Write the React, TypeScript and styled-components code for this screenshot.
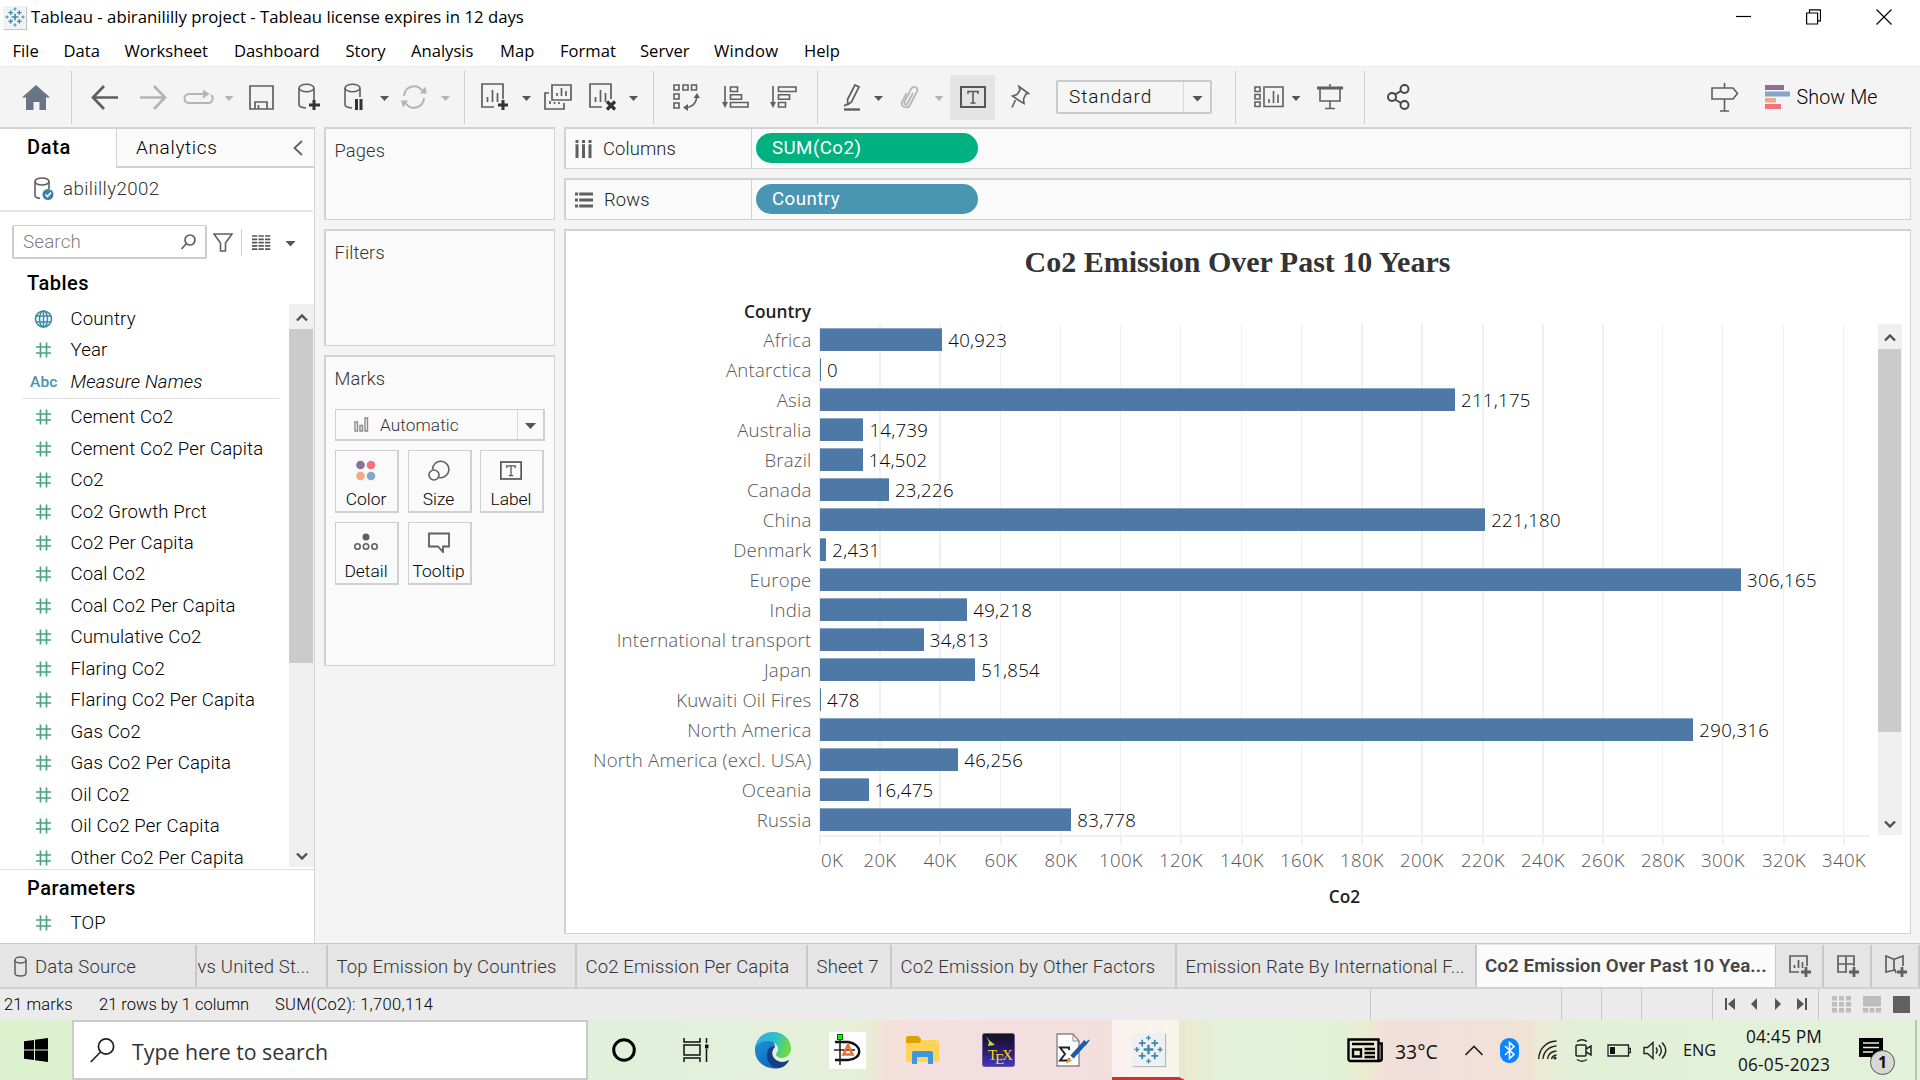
import React from "react";
import styled, { createGlobalStyle, css } from "styled-components";

const ui = `Roboto, "Liberation Sans", sans-serif`;
const segoe = `"Open Sans", "Noto Sans", sans-serif`;
const line = "#d2d2d2";
const ink = "#5f5f5f";
const faint = "#b4b4b4";

const GlobalStyle = createGlobalStyle`
  * { box-sizing: border-box; }
  body { margin: 0; background: #f4f4f4; overflow: hidden; }
  svg { display: block; flex: none; }
`;

const Window = styled.div`
  width: 1920px; height: 1080px; display: flex; flex-direction: column;
  background: #f4f4f4; font-family: ${ui}; font-weight: 300; color: #000; overflow: hidden; white-space: nowrap;
`;

/* ---------- title and menu ---------- */
const TitleBar = styled.header`
  height: 34px; flex: none; background: #fff; display: flex; align-items: center; padding: 0 28px 0 3px;
  font: 16.76px/34px ${segoe};
`;
const AppBadge = styled.div`
  width: 23px; height: 23px; margin-right: 5px; background: #f1f2f4; box-shadow: 1px 1px 1px #c4c6c8;
  display: flex; align-items: center; justify-content: center;
`;
const TitleText = styled.span`padding-top: 0;`;
const WindowButtons = styled.div`margin-left: auto; display: flex; gap: 55px; align-items: center;`;
const MenuBar = styled.nav`
  height: 32px; flex: none; background: #fff; display: flex; padding-left: 12.5px; font: 16.6px/33px ${segoe};
`;
const MenuItem = styled.span<{ $w: number; $ls?: number }>`
  width: ${p => p.$w}px; letter-spacing: ${p => p.$ls ?? 0}px;
`;

/* ---------- toolbar ---------- */
const Toolbar = styled.div`
  height: 61px; flex: none; display: flex; align-items: center; background: #f4f4f4; border-top: 1px solid #ececec;
`;
const Tool = styled.div<{ $gap: number; $w: number; $on?: boolean }>`
  margin-left: ${p => p.$gap}px; width: ${p => p.$w}px; height: 45px; flex: none;
  display: flex; align-items: center; justify-content: center;
  background: ${p => (p.$on ? "#e4e4e4" : "transparent")};
`;
const Rule = styled.i<{ $gap: number }>`
  margin-left: ${p => p.$gap}px; width: 1px; height: 53px; flex: none; background: #cfcfcf;
`;
const Caret = styled.i<{ $gap?: number; $c?: string; $w?: number }>`
  margin-left: ${p => p.$gap ?? 0}px; margin-top: 3px; width: ${p => p.$w ?? 9}px; height: ${p => (p.$w ? 6 : 5)}px; flex: none;
  background: ${p => p.$c ?? "#555"}; clip-path: polygon(0 0, 100% 0, 50% 100%);
`;
const FitSelect = styled.div`
  margin-left: 26px; width: 156px; height: 34px; border: 2px solid #cbcbcb; border-radius: 2px; background: #f5f5f5;
  display: flex; align-items: center; font-size: 19px; letter-spacing: 0.95px; color: #111;
  span { width: 126px; padding-left: 11px; line-height: 30px; border-right: 1px solid #d8d8d8; }
`;
const ShowMe = styled.span`margin-left: 7px; font-size: 19.7px; letter-spacing: 0.1px; color: #000;`;

/* ---------- body ---------- */
const Body = styled.main`height: 816px; flex: none; display: flex;`;

const DataPane = styled.aside`
  width: 315px; background: #fff; border-top: 2px solid ${line}; border-right: 1px solid ${line};
  display: flex; flex-direction: column;
`;
const PaneTabs = styled.div`height: 39px; flex: none; display: flex;`;
const PaneTabOn = styled.div`width: 116px; padding-left: 27px; font: 500 20px/37px ${ui}; letter-spacing: 0.65px;`;
const PaneTab = styled.div`
  flex: 1; display: flex; justify-content: space-between; align-items: center; padding: 0 11px 0 19px;
  background: #fafafa; border-left: 1px solid ${line}; border-bottom: 2px solid ${line};
  font-size: 19px; letter-spacing: 0.65px; color: #000;
`;
const Source = styled.div`
  height: 44px; flex: none; display: flex; align-items: center; gap: 9px; padding-left: 34px; margin-right: 1px;
  border-bottom: 2px solid #e4e4e4; font-size: 18.7px; letter-spacing: 0.4px; color: #333;
`;
const SearchRow = styled.div`height: 62px; flex: none; display: flex; align-items: center; padding: 0 0 2px 12px;`;
const SearchBox = styled.div`
  width: 195px; height: 34px; border: 2px solid #cdcdcd; border-width: 1px 2px 2px; border-radius: 2px; display: flex; align-items: center;
  justify-content: space-between; padding: 0 9px; font-size: 18.8px; letter-spacing: 0.15px; color: #808080;
`;
const SearchRule = styled.i`width: 1px; height: 27px; background: #ccc; margin: 0 10px 0 8px;`;
const Heading = styled.h3<{ $h: number; $lh: number }>`
  margin: 0; height: ${p => p.$h}px; flex: none; padding-left: 27px; font: 500 20px/${p => p.$lh}px ${ui}; letter-spacing: 0.5px;
`;
const FieldArea = styled.div`height: 566px; flex: none; display: flex; border-bottom: 1px solid #dedede;`;
const Fields = styled.ul`flex: 1; margin: -1px 0 0; padding: 0; list-style: none;`;
const Field = styled.li<{ $i?: boolean }>`
  height: 31.47px; display: flex; align-items: center; font-size: 18.6px; letter-spacing: 0.13px; color: #000;
  font-style: ${p => (p.$i ? "italic" : "normal")};
  svg, b { margin-left: 30px; margin-right: 13.5px; width: 27px; flex: none; }
  b { font: 500 15.5px ${ui}; color: #4a90b0; text-align: center; }
`;
const FieldRule = styled.li`height: 1px; margin: 1px 10px 2px 23px; background: #dcdcdc;`;

const ScrollBar = styled.div<{ $w: number; $ml?: number }>`
  width: ${p => p.$w}px; margin-left: ${p => p.$ml ?? 0}px; flex: none; background: #f0f0f0; display: flex; flex-direction: column;
  justify-content: space-between; align-items: center; margin-bottom: 2px;
`;
const ScrollEnd = styled.div`height: 25px; padding-top: 3px; display: flex; align-items: center; justify-content: center;`;
const Thumb = styled.div<{ $h: number }>`
  height: ${p => p.$h}px; width: calc(100% - 1px); align-self: flex-start; background: #cbcbcb; margin-bottom: auto;
`;

const card = css`border: solid ${line}; border-width: 2px 1px 1px 2px; background: #fafafa;`;
const Cards = styled.section`width: 231px; margin-left: 9px; display: flex; flex-direction: column; gap: 9px;`;
const Card = styled.div<{ $h: number }>`
  ${card} height: ${p => p.$h}px; padding: 10px 9px 0; font-size: 18.3px; letter-spacing: 0.15px; color: #333;
`;
const CardName = styled.div`line-height: 24px; height: 24px; margin-left: -0.5px;`;
const MarkType = styled.div`
  margin-top: 18px; width: 210px; height: 32px; border: 2px solid #cfcfcf; border-width: 1px 2px 2px 1px; display: flex; align-items: center;
  font-size: 17.2px; letter-spacing: 0.1px; color: #333;
  div { display: flex; align-items: center; gap: 11px; width: 182px; height: 100%; padding-left: 18px; border-right: 1px solid #dadada; }
`;
const MarkGrid = styled.div`margin-top: 9px; display: grid; grid-template-columns: repeat(3, 64px); gap: 9px 8.500px;`;
const MarkButton = styled.div`
  height: 63px; border: 2px solid #d0d0d0; border-width: 1px 2px 2px 1px; display: flex; flex-direction: column; align-items: center;
  justify-content: space-between; padding: 8px 1px 1px 0; font-size: 17.4px; line-height: 22px; color: #000; letter-spacing: 0;
`;

const Sheet = styled.section`width: 1347px; margin-left: 9px; display: flex; flex-direction: column; gap: 9px;`;
const Shelf = styled.div`${card} height: 42px; flex: none; display: flex; align-items: center;`;
const ShelfName = styled.div`
  width: 186px; height: 100%; border-right: 1px solid ${line}; display: flex; align-items: center; gap: 11px; padding-left: 9px;
  font-size: 18.4px; letter-spacing: 0.1px; color: #222;
`;
const Pill = styled.div<{ $c: string }>`
  margin: -2px 0 0 4px; width: 222px; height: 30px; border-radius: 15px; background: ${p => p.$c};
  color: #fff; font: 18.7px/30px ${ui}; letter-spacing: 0.45px; padding-left: 16px;
`;
const View = styled.div`${card} background: #fff; height: 705px; display: flex; flex-direction: column;`;
const ChartTitle = styled.h1`
  margin: 14px 0 0; padding-right: 1px; height: 35px; text-align: center; color: #333;
  font: bold 30px/34px "Liberation Serif", serif;
`;
const ColumnHead = styled.div`
  height: 44px; width: 245px; padding-top: 20px; text-align: right; color: #222; font: 600 17.3px/24px ${segoe};
`;
const PlotRow = styled.div`height: 513px; display: flex;`;
const Names = styled.div`width: 245.5px; padding-top: 1px; text-align: right; color: #555; font: 300 18.6px/30px ${segoe}; letter-spacing: 0.22px;
  div { height: 30px; }`;
const Plot = styled.div`position: relative; width: 1051px; margin-left: 7.5px; border-bottom: 2px solid #f0f0f0;`;
const GridLine = styled.i`position: absolute; top: 0; bottom: 0; background: #f0f0f0;`;
const BarRow = styled.div`position: relative; height: 30px; padding-left: 1px; display: flex; align-items: center; gap: 6px;
  font: 300 18.6px/30px ${segoe}; letter-spacing: 0.3px; color: #000;`;
const Bar = styled.i`height: 23px; background: #4e79a7; border-top: 1px solid #8ba6c5; flex: none;`;
const BarValue = styled.span`padding-top: 1px;`;
const Axis = styled.div`position: relative; margin-left: 253px; width: 1051px; height: 45px; color: #555; font: 300 18.6px/24px ${segoe}; letter-spacing: 0.3px;`;
const Tick = styled.i`position: absolute; top: 0; width: 2px; height: 8px; background: #f0f0f0;`;
const TickText = styled.span`position: absolute; top: 11px; transform: translateX(-50%);`;
const AxisTitle = styled.div`margin-left: 253px; width: 1051px; text-align: center; color: #222; font: 600 17.3px/30px ${segoe};`;

/* ---------- sheet tabs and status ---------- */
const TabBar = styled.div`
  height: 46px; flex: none; display: flex; background: #e5e5e5; border-top: 1px solid #c8c8c8; border-bottom: 2px solid #d2d2d2; padding-top: 1px;
  font-size: 18.5px; letter-spacing: 0.17px; color: #333;
`;
const Tab = styled.div<{ $w: number; $pad?: number; $on?: boolean }>`
  width: ${p => p.$w}px; flex: none; border-right: ${p => (p.$on ? 1 : 2)}px solid #c8c8c8; padding-left: ${p => p.$pad ?? 8.5}px;
  display: flex; align-items: center; gap: 8px; overflow: hidden; padding-top: 1px;
  ${p => p.$on && css`background: #fbfbfb; color: #444; font-weight: 600; font-size: 18.75px; letter-spacing: 0.07px; padding-top: 0;`}
`;
const StatusBar = styled.div`height: 31px; flex: none; background: #ebebeb; display: flex; padding-left: 4px; font-size: 16.5px; line-height: 32px; color: #000;`;
const StatusText = styled.span<{ $w: number; $ls?: number }>`width: ${p => p.$w}px; letter-spacing: ${p => p.$ls ?? 0}px;`;
const StatusCell = styled.div<{ $w: number; $pad?: number; $gap?: number }>`
  width: ${p => p.$w}px; flex: none; border-left: 1px solid #c8c8c8; display: flex; align-items: center;
  padding-left: ${p => p.$pad ?? 0}px; gap: ${p => p.$gap ?? 0}px;
`;

/* ---------- taskbar ---------- */
const Taskbar = styled.footer`
  height: 60px; flex: none; display: flex; align-items: center; font-family: ${segoe}; font-weight: 400; color: #111;
  background: linear-gradient(90deg, #dcf1cd 0, #dff0da 540px, #e5f0dc 800px, #e6efd6 862px, #f3e2d8 885px, #f3dfdf 920px, #f2dedd 1100px,
    #f3e6d4 1150px, #eaebd0 1190px, #e3f1d8 1220px, #e2f1d6 1345px, #ecebd0 1366px, #f2dfda 1385px, #f1dfdc 1440px, #f0e2d5 1525px, #ecead2 1540px, #e2f0d8 1575px, #e4f1da 1920px);
`;
const TaskSearch = styled.div`
  margin-left: 24px; width: 516px; height: 60px; border: 2px solid #cacaca; background: #fff; display: flex; align-items: center; gap: 17px;
  padding-left: 16px; font-size: 21.3px; color: #333; span { padding-top: 3px; }
`;
const TaskIcon = styled.div<{ $gap: number; $w: number }>`
  margin-left: ${p => p.$gap}px; width: ${p => p.$w}px; flex: none; display: flex; justify-content: center;
`;
const ActiveApp = styled.div`
  margin-left: 22px; width: 73px; height: 60px; flex: none; background: rgba(255,255,255,.55); border-bottom: 3px solid #c8352b;
  display: flex; align-items: center; justify-content: center; padding: 2px 0 0 5px;
  border-right: 6px solid rgba(226,220,190,.6);
`;
const AppTile = styled.div`width: 33px; height: 33px; background: #eef1f3; box-shadow: 1px 1px 1px #b8b8b8; display: flex; align-items: center; justify-content: center;`;
const TrayText = styled.span<{ $gap: number; $w: number; $s: number; $t?: number }>`
  margin-left: ${p => p.$gap}px; width: ${p => p.$w}px; flex: none; font-size: ${p => p.$s}px; padding-top: ${p => p.$t ?? 0}px;
`;
const Clock = styled.div`margin-left: 17px; width: 98px; flex: none; text-align: center; font-size: 17.3px; line-height: 28px; padding-top: 1px;
  span { letter-spacing: .2px; display: block; }`;
const Notice = styled.div`position: relative; margin-left: 26px; width: 36px; height: 46px; flex: none; padding-top: 11px;`;
const Count = styled.span`
  position: absolute; left: 11px; top: 23px; width: 25px; height: 25px; border-radius: 50%; border: 1px solid #555; background: #d6d8d2;
  text-align: center; font: bold 16px/22px ${segoe};
`;
const Peek = styled.i`margin-left: 20px; width: 2px; height: 60px; background: #b9c5b2; flex: none;`;

/* ---------- icons ---------- */
type IconProps = { w: number; h: number; vb?: string; c?: string; sw?: number; children: React.ReactNode };
const Icon = ({ w, h, vb, c = ink, sw = 1.6, children }: IconProps) => (
  <svg width={w} height={h} viewBox={vb ?? `0 0 ${w} ${h}`} fill="none" stroke={c} strokeWidth={sw}>{children}</svg>
);

const TableauMark = ({ s }: { s: number }) => (
  <svg width={s} height={s} viewBox="0 0 30 30" stroke="#3f86af" fill="none">
    <path strokeWidth="2.4" d="M15 10v10M10 15h10" />
    <path strokeWidth="1.8" d="M8.500 5v7M5 8.500h7M21.500 5v7M18 8.500h7M8.500 18v7M5 21.500h7M21.500 18v7M18 21.500h7" />
    <path strokeWidth="1.4" d="M15 .5v5M12.500 3h5M15 24.500v5M12.500 27h5M3 12.500v5M.5 15h5M27 12.500v5M24.500 15h5" />
  </svg>
);
const Hash = () => (
  <Icon w={27} h={16} c="#4aa57f" sw={1.7}><path d="M10.500.5v15M16.500.5v15M6 5h15M6 11h15" /></Icon>
);
const Globe = () => (
  <Icon w={27} h={18} c="#4389aa" sw={1.6}><circle cx="13.500" cy="9" r="8" /><ellipse cx="13.500" cy="9" rx="4" ry="8" /><path d="M13.500 1v16M6 6h15M6 12h15" /></Icon>
);
const ChevUp = ({ flip }: { flip?: boolean }) => (
  <Icon w={12} h={8} c="#505050" sw={2.4}><path d={flip ? "M1 1.500l5 5 5-5" : "M1 6.500l5-5 5 5"} /></Icon>
);
const SheetGlyph = "M13 24H1V1h21v15M6.500 19v-5M11.500 19V7M16.500 19v-9";
const Plus = "M22 17v10M17 22h10";
const LabelT = ({ w, h }: { w: number; h: number }) => (
  <Icon w={w} h={h} vb="0 0 26 22" c="#555"><rect x="1" y="1" width="24" height="20" strokeWidth="2" /><path d="M8 8V5.500h10V8M13 5.500V17M10.500 17h5" strokeWidth="1.500" /></Icon>
);

/* ---------- data ---------- */
const measures = ["Cement Co2", "Cement Co2 Per Capita", "Co2", "Co2 Growth Prct", "Co2 Per Capita", "Coal Co2", "Coal Co2 Per Capita",
  "Cumulative Co2", "Flaring Co2", "Flaring Co2 Per Capita", "Gas Co2", "Gas Co2 Per Capita", "Oil Co2", "Oil Co2 Per Capita", "Other Co2 Per Capita"];
const data: [string, number][] = [["Africa", 40923], ["Antarctica", 0], ["Asia", 211175], ["Australia", 14739], ["Brazil", 14502], ["Canada", 23226],
  ["China", 221180], ["Denmark", 2431], ["Europe", 306165], ["India", 49218], ["International transport", 34813], ["Japan", 51854],
  ["Kuwaiti Oil Fires", 478], ["North America", 290316], ["North America (excl. USA)", 46256], ["Oceania", 16475], ["Russia", 83778]];
const ticks = Array.from({ length: 18 }, (_, i) => i * 20);
const menus: [string, number, number?][] = [["File", 51], ["Data", 61], ["Worksheet", 109.5], ["Dashboard", 111.5], ["Story", 65.5], ["Analysis", 89],
  ["Map", 60], ["Format", 80], ["Server", 74], ["Window", 90, 0.3], ["Help", 60]];

function MainToolbar() {
  return (
    <Toolbar>
      <Tool $gap={22} $w={28}><svg width="28" height="25" fill="#687585"><path d="M14 0l14 12.500h-4V25h-6.500v-8h-6v8H4V12.500H0z" /></svg></Tool>
      <Rule $gap={21} />
      <Tool $gap={19} $w={27}><Icon w={27} h={25} sw={2.7}><path d="M13 1L2 12.500 13 24M2 12.500h25" /></Icon></Tool>
      <Tool $gap={21.5} $w={27}><Icon w={27} h={25} c={faint} sw={2.7}><path d="M14 1l11 11.500L14 24M25 12.500H0" /></Icon></Tool>
      <Tool $gap={16} $w={31}><Icon w={31} h={16} c={faint} sw={2}><path d="M21 5H6a4.500 4.500 0 000 9h19a4.500 4.500 0 003-8" /><path d="M20 .5v9l6.500-4.500z" fill={faint} stroke="none" /></Icon></Tool>
      <Caret $gap={11} $c={faint} />
      <Tool $gap={15} $w={25}><Icon w={25} h={25} sw={1.7}><path d="M1 1h23v23H1zM6 24v-7h12v7M9.500 24v-4" /></Icon></Tool>
      <Tool $gap={24.5} $w={22}><Icon w={22} h={28} vb="0 0 22 28"><ellipse cx="8.500" cy="5" rx="7.500" ry="3.700" /><path d="M1 5v16.500c0 2 3 3.200 7 3.500M16 5v12" /><path d="M16 17v10M11 22h11" stroke="#333" strokeWidth="3" /></Icon></Tool>
      <Tool $gap={24} $w={22}><Icon w={22} h={28} vb="0 0 22 28"><ellipse cx="8.500" cy="5" rx="7.500" ry="3.700" /><path d="M1 5v16.500c0 2 3 3.200 7 3.500M16 5v9" /><path d="M12.500 16v11M17 16v11" stroke="#333" strokeWidth="3" /></Icon></Tool>
      <Caret $gap={14} />
      <Tool $gap={12} $w={26}><Icon w={26} h={26} c={faint} sw={2}><path d="M3 12A10 10.500 0 0121 6.500M23 14A10 10.500 0 015 19.500" /><path d="M19 9.500h7l-2-7zM7 16.500H0l2 7z" fill={faint} stroke="none" /></Icon></Tool>
      <Caret $gap={14} $c={faint} />
      <Rule $gap={14} />
      <Tool $gap={16} $w={28}><Icon w={28} h={28} sw={1.7}><path d={SheetGlyph} /><path d={Plus} stroke="#333" strokeWidth="3" /></Icon></Tool>
      <Caret $gap={13} />
      <Tool $gap={13} $w={28}><Icon w={28} h={26} sw={1.7}><path d="M8 1h19v15H8zM13 12V9M17.500 12V4M22 12V7M5 9H1v16h19v-6M6 20v-3M10.500 20v-2M15 20v-2" /></Icon></Tool>
      <Tool $gap={17} $w={28}><Icon w={28} h={28} sw={1.7}><path d={SheetGlyph} /><path d="M18 18.500l8 8M26 18.500l-8 8" stroke="#333" strokeWidth="3.200" /></Icon></Tool>
      <Caret $gap={12} />
      <Rule $gap={15} />
      <Tool $gap={19} $w={27}><Icon w={27} h={28}><path d="M1 2h5v5H1zM10 2h5v5h-5zM18.500 2h5v5h-5zM1 11h5v5H1zM1 20h5v5H1zM12 24.500c7 0 11-4 12-11" /><path d="M24 10l-3.500 5H27zM10 24.500l5-3.500v7z" fill={ink} stroke="none" /></Icon></Tool>
      <Tool $gap={21} $w={28}><Icon w={28} h={24}><path d="M4 1v20M9.500 2h7v4.500h-7zM9.500 9.700h11v4.500h-11zM9.500 17.500H27V22H9.500z" /><path d="M1 17h6l-3 6z" fill={ink} stroke="none" /></Icon></Tool>
      <Tool $gap={20} $w={28}><Icon w={28} h={24}><path d="M4 1v20M9.500 2H27v4.500H9.500zM9.500 9.700h11v4.500h-11zM9.500 17.500h7V22h-7z" /><path d="M1 17h6l-3 6z" fill={ink} stroke="none" /></Icon></Tool>
      <Rule $gap={20} />
      <Tool $gap={25} $w={18}><Icon w={18} h={28} vb="0 0 18 28" sw={1.7}><path d="M12 2l4 2-7.500 15-3.500 2.500-.5-5zM1 23l3-2" /><path d="M1 26.500h16" strokeWidth="2.400" /></Icon></Tool>
      <Caret $gap={13} />
      <Tool $gap={17.5} $w={18}><Icon w={19} h={24} c={faint} sw={1.7}><path d="M13 8L7.500 18.500c-1 2-4 .8-3-1.500L11 4c1.500-4 8-2 6 2.500L10 20c-2.500 4.500-10 2-8-3L6.500 8" /></Icon></Tool>
      <Caret $gap={16} $c={faint} />
      <Tool $gap={6.5} $w={45} $on><LabelT w={26} h={22} /></Tool>
      <Tool $gap={14} $w={21}><Icon w={21} h={26}><path d="M10 2.500l9.500 7-2.500.5-2.500 5 .5 4.500-5-3-6.500-4.500 4.500-1.500 3-4.500zM6.500 16L3 23.500" /></Icon></Tool>
      <FitSelect><span>Standard</span><Caret $gap={8} $w={11} /></FitSelect>
      <Rule $gap={23} />
      <Tool $gap={18} $w={30}><Icon w={30} h={22}><path d="M1 1h5v4.500H1zM1 8.500h5V13H1zM1 16h5v4.500H1zM10 1h19v19.500H10zM15 17v-4M19.500 17V5M24 17V8.500" /></Icon></Tool>
      <Caret $gap={7.5} />
      <Tool $gap={16} $w={26}><Icon w={26} h={26}><path d="M13 0v3M3 4v13h20V4M13 17v7M8 24.500h10" /><path d="M0 4h26" strokeWidth="3" /></Icon></Tool>
      <Rule $gap={21} />
      <Tool $gap={22.5} $w={23}><Icon w={23} h={26} c="#444" sw={1.9}><circle cx="5" cy="13" r="4" /><circle cx="17.500" cy="5" r="4" /><circle cx="17.500" cy="21" r="4" /><path d="M8 10.500l6-3.500M8 15.500l6 3.500" /></Icon></Tool>
      <Tool $gap={300.5} $w={28}><Icon w={28} h={29}><path d="M1 5h21l4.500 5.500L22 16H1zM13.500 0v5M13.500 16v12M9 28h9" /></Icon></Tool>
      <Tool $gap={26} $w={25}><svg width="25" height="24"><path fill="#8a7196" d="M0 0h19v5H0z" /><path fill="#84a6cb" d="M0 6.500h25v5H0z" /><path fill="#f3a981" d="M0 13h11v4.500H0z" /><path fill="#f7707f" d="M0 19h16v5H0z" /></svg></Tool>
      <ShowMe>Show Me</ShowMe>
    </Toolbar>
  );
}

function LeftPane() {
  return (
    <DataPane>
      <PaneTabs>
        <PaneTabOn>Data</PaneTabOn>
        <PaneTab><span>Analytics</span><Icon w={10} h={16} sw={1.8}><path d="M9 1L1.500 8 9 15" /></Icon></PaneTab>
      </PaneTabs>
      <Source>
        <Icon w={20} h={24}><ellipse cx="8" cy="4.500" rx="7" ry="3.500" /><path d="M1 4.500v14c0 1.500 2 2.500 5 2.900M15 4.500V12" /><circle cx="14" cy="17.500" r="5.500" fill="#3b82a6" stroke="none" /><path d="M11.500 17.500l2 2 3.500-4" stroke="#fff" /></Icon>
        abililly2002
      </Source>
      <SearchRow>
        <SearchBox>Search<Icon w={15} h={16} sw={1.7}><circle cx="9" cy="6" r="5" /><path d="M5.500 9.500L.5 15" /></Icon></SearchBox>
        <Tool $gap={6} $w={20}><Icon w={20} h={19}><path d="M1 1h18l-6.500 9v8h-5v-8z" /></Icon></Tool>
        <SearchRule />
        <Icon w={19} h={15} c="#555" sw={1.7}><path strokeDasharray="5.300 1.200" d="M0 1h19M0 4.300h19M0 7.600h19M0 10.900h19M0 14.100h19" /></Icon>
        <Caret $gap={14} $w={11} />
      </SearchRow>
      <Heading $h={30} $lh={18}>Tables</Heading>
      <FieldArea>
        <Fields>
          <Field><Globe />Country</Field>
          <Field><Hash />Year</Field>
          <Field $i><b>Abc</b>Measure Names</Field>
          <FieldRule />
          {measures.map(m => <Field key={m}><Hash />{m}</Field>)}
        </Fields>
        <ScrollBar $w={25}>
          <ScrollEnd><ChevUp /></ScrollEnd>
          <Thumb $h={334} />
          <ScrollEnd><ChevUp flip /></ScrollEnd>
        </ScrollBar>
      </FieldArea>
      <Heading $h={37} $lh={36}>Parameters</Heading>
      <Field as="div"><Hash />TOP</Field>
    </DataPane>
  );
}

function MarkCards() {
  return (
    <Cards>
      <Card $h={93}><CardName>Pages</CardName></Card>
      <Card $h={117}><CardName>Filters</CardName></Card>
      <Card $h={311}>
        <CardName>Marks</CardName>
        <MarkType>
          <div><Icon w={15} h={16} c="#8a8a8a" sw={1.4}><path d="M1 5h2.500v9H1zM6 8.500h2.500V14H6zM11 1h2.500v13H11z" /></Icon>Automatic</div>
          <Caret $gap={7} $w={11} />
        </MarkType>
        <MarkGrid>
          <MarkButton><svg width="20" height="22"><circle cx="4.500" cy="6" r="4.300" fill="#8a7196" /><circle cx="15" cy="6" r="4.300" fill="#f7707f" /><circle cx="4.500" cy="17" r="4.300" fill="#f3a981" /><circle cx="15" cy="17" r="4.300" fill="#84a6cb" /></svg>Color</MarkButton>
          <MarkButton><Icon w={22} h={22}><path d="M4.500 10.500a8.200 8.200 0 116.500 8" /><circle cx="6" cy="16" r="5" /></Icon>Size</MarkButton>
          <MarkButton><LabelT w={22} h={23} />Label</MarkButton>
          <MarkButton><Icon w={24} h={22}><circle cx="12" cy="6" r="3.500" fill={ink} stroke="none" /><circle cx="3.500" cy="15.500" r="2.700" /><circle cx="12" cy="15.500" r="2.700" /><circle cx="20.500" cy="15.500" r="2.700" /></Icon>Detail</MarkButton>
          <MarkButton><Icon w={22} h={22} sw={1.8}><path d="M1 2.500h20v13h-6v5.500l-5-5.500H1z" /></Icon>Tooltip</MarkButton>
        </MarkGrid>
      </Card>
    </Cards>
  );
}

const Chart = () => (
  <View>
    <ChartTitle>Co2 Emission Over Past 10 Years</ChartTitle>
    <ColumnHead>Country</ColumnHead>
    <PlotRow>
      <Names>{data.map(([n]) => <div key={n}>{n}</div>)}</Names>
      <Plot>
        {ticks.map((t, i) => <GridLine key={t} style={{ left: Math.round(i * 60.23), width: i === 1 || i === 2 || (i > 8 && i < 14) ? 2 : 1 }} />)}
        {data.map(([n, v]) => (
          <BarRow key={n}>
            <Bar style={{ width: Math.max(1, v * 0.0030117 - 1) }} />
            <BarValue>{v.toLocaleString("en-US")}</BarValue>
          </BarRow>
        ))}
      </Plot>
      <ScrollBar $w={24} $ml={8}>
        <ScrollEnd><ChevUp /></ScrollEnd>
        <Thumb $h={383} />
        <ScrollEnd><ChevUp flip /></ScrollEnd>
      </ScrollBar>
    </PlotRow>
    <Axis>
      {ticks.map((t, i) => (
        <React.Fragment key={t}>
          <Tick style={{ left: Math.round(i * 60.23) }} />
          <TickText style={{ left: i === 0 ? 13 : Math.round(i * 60.23) + 1 }}>{t}K</TickText>
        </React.Fragment>
      ))}
    </Axis>
    <AxisTitle>Co2</AxisTitle>
  </View>
);

const NewTab = ({ d }: { d: string }) => (
  <Tab $w={48} $pad={13}><Icon w={23} h={23} sw={1.7}><path d={d} /><path d="M17 12v10M12 17h10" strokeWidth="2.800" /></Icon></Tab>
);

export default function App() {
  return (
    <Window>
      <GlobalStyle />
      <TitleBar>
        <AppBadge><TableauMark s={20} /></AppBadge>
        <TitleText>Tableau - abiranililly project - Tableau license expires in 12 days</TitleText>
        <WindowButtons>
          <Icon w={15} h={16} c="#000" sw={1.2}><path d="M0 7.500h15" /></Icon>
          <Icon w={15} h={16} c="#000" sw={1.2}><path d="M.6 4h11v11H.6zM3.500 4V.8h11v11h-3" /></Icon>
          <Icon w={16} h={16} c="#000" sw={1.2}><path d="M.5.500l15 15M15.500.500l-15 15" /></Icon>
        </WindowButtons>
      </TitleBar>
      <MenuBar>{menus.map(([m, w, ls]) => <MenuItem key={m} $w={w} $ls={ls}>{m}</MenuItem>)}</MenuBar>
      <MainToolbar />
      <Body>
        <LeftPane />
        <MarkCards />
        <Sheet>
          <Shelf>
            <ShelfName><Icon w={17} h={18} sw={3}><path strokeDasharray="3 1.200 14" d="M2 0v18M8.500 0v18M15 0v18" /></Icon>Columns</ShelfName>
            <Pill $c="#00b180">SUM(Co2)</Pill>
          </Shelf>
          <Shelf>
            <ShelfName><Icon w={18} h={16} sw={2.8}><path strokeDasharray="3 1.200 14" d="M0 2h18M0 8h18M0 14h18" /></Icon>Rows</ShelfName>
            <Pill $c="#4996b2">Country</Pill>
          </Shelf>
          <Chart />
        </Sheet>
      </Body>
      <TabBar>
        <Tab $w={197} $pad={14}><Icon w={13} h={21} sw={1.5}><ellipse cx="6.500" cy="4" rx="5.500" ry="3" /><path d="M1 4v13c0 4 11 4 11 0V4" /></Icon>Data Source</Tab>
        <Tab $w={131} $pad={0.5}>vs United St...</Tab>
        <Tab $w={249}>Top Emission by Countries</Tab>
        <Tab $w={231}>Co2 Emission Per Capita</Tab>
        <Tab $w={84}>Sheet 7</Tab>
        <Tab $w={285}>Co2 Emission by Other Factors</Tab>
        <Tab $w={300}>Emission Rate By International F...</Tab>
        <Tab $w={299} $pad={8} $on>Co2 Emission Over Past 10 Yea...</Tab>
        <NewTab d="M10 17H1V1h17v10M5.500 13v-3M9.500 13V5M13.500 13V7" />
        <NewTab d="M10 17H1V1h16v10M1 9h16M9 1v16" />
        <NewTab d="M11 18l-1-3-9 2V1l7 3h2l8-3v10M9 4v12" />
      </TabBar>
      <StatusBar>
        <StatusText $w={95} $ls={0.1}>21 marks</StatusText>
        <StatusText $w={176}>21 rows by 1 column</StatusText>
        <StatusText $w={1095} $ls={0.3}>SUM(Co2): 1,700,114</StatusText>
        <StatusCell $w={191} />
        <StatusCell $w={40} />
        <StatusCell $w={40} />
        <StatusCell $w={71} />
        <StatusCell $w={106} $pad={12}>
          <svg width="82" height="13" fill="#555"><path d="M0 0h2v12H0zM10 0v12L3 6zM32 0v12l-6-6zM50 0v12l6-6zM72 0v12l7-6zM80 0h2v12h-2z" /></svg>
        </StatusCell>
        <StatusCell $w={101} $pad={13} $gap={12}>
          <svg width="19" height="17" fill="#bdbdbd"><path d="M0 0h5v4.500H0zM7 0h5v4.500H7zM14 0h5v4.500h-5zM0 6h5v4.500H0zM7 6h5v4.500H7zM14 6h5v4.500h-5zM0 12h5v4.500H0zM7 12h5v4.500H7zM14 12h5v4.500h-5z" /></svg>
          <svg width="18" height="17" fill="#bdbdbd"><path d="M0 0h18v10.500H0zM0 12h5v4.500H0zM6.500 12h5v4.500h-5zM13 12h5v4.500h-5z" /></svg>
          <svg width="17" height="17" fill="#606060"><path d="M0 0h17v17H0z" /></svg>
        </StatusCell>
      </StatusBar>
      <Taskbar>
        <TaskIcon $gap={24} $w={24}><svg width="24" height="24"><path d="M0 3.300L10 2v9.500H0zM11 1.800L24 0v11.500H11zM0 12.500h10V22L0 20.700zM11 12.500h13V24l-13-1.800z" /></svg></TaskIcon>
        <TaskSearch><Icon w={25} h={25} c="#222" sw={1.7}><circle cx="16" cy="8.500" r="7.600" /><path d="M10.500 14L.8 24" /></Icon><span>Type here to search</span></TaskSearch>
        <TaskIcon $gap={24} $w={24}><Icon w={24} h={24} c="#000" sw={3}><circle cx="12" cy="12" r="10.300" /></Icon></TaskIcon>
        <TaskIcon $gap={47} $w={26}><Icon w={26} h={24} c="#111" sw={1.5}><path d="M1 0v4h16V0M1 7h16v10H1zM1 24v-4h16v4M23.500 0v5M23.500 11v13" /><path d="M22 6.500h3.500v4H22z" fill="#111" stroke="none" /></Icon></TaskIcon>
        <TaskIcon $gap={45} $w={38}>
          <svg width="38" height="38" viewBox="0 0 38 38">
            <defs>
              <linearGradient id="e1" x1="0" y1="0" x2="1" y2=".3"><stop offset="0" stopColor="#2fa9e6" /><stop offset=".6" stopColor="#2fc1c9" /><stop offset="1" stopColor="#6fd84a" /></linearGradient>
              <linearGradient id="e2" x1="0" y1="0" x2="1" y2="1"><stop offset="0" stopColor="#1f93dd" /><stop offset="1" stopColor="#0b57a8" /></linearGradient>
            </defs>
            <path fill="url(#e2)" d="M1 17c1-7 7-10 12-9 5 0 8 3 8 8-4 2-5 7-2 11 3 5 10 6 16 2-3 6-9 9-15 8.500C9 37 0 29 1 17z" />
            <path fill="#123f86" d="M14 19c-3 9 2 18 10 18 5 0 9-3.500 11-8-5 3-11 2.500-14.500-1.500-3-3.500-3-8 .5-11.500-3-1-6 0-7 3z" />
            <path fill="url(#e1)" d="M1 17C3 6 10 1 19 1c10 0 18 7 18 16 0 6-4 10-9 10-4 0-6-2-6-3.500s2-2 2-5.500c0-4-4-8-10-8-6-.5-11 2.500-13 7z" />
          </svg>
        </TaskIcon>
        <TaskIcon $gap={37} $w={37}>
          <svg width="37" height="37" fill="none"><rect width="37" height="37" fill="#fff" /><path d="M6 10h13c15 2 15 17 0 18H6" stroke="#111" strokeWidth="2.400" /><path d="M11 3v30M5 18h21" stroke="#222" strokeWidth="1.600" /><path d="M19 13l-4.500 9.500h9z" stroke="#f26b2b" strokeWidth="2.500" /><rect x="8.500" y="2.500" width="5" height="5" fill="#0f0" stroke="#060" /></svg>
        </TaskIcon>
        <TaskIcon $gap={40} $w={33}>
          <svg width="33" height="28"><path fill="#e0a100" d="M0 2q0-2 2-2h10l3 3v5H0z" /><path fill="#ffd25a" d="M0 7h13l3-3h15q2 0 2 2v18q0 2-2 2H2q-2 0-2-2z" /><path fill="#3d97e0" d="M8 15h17q2 0 2 2v11h-5v-7H11v7H6V17q0-2 2-2z" /></svg>
        </TaskIcon>
        <TaskIcon $gap={43} $w={33}>
          <svg width="33" height="34">
            <defs><linearGradient id="tx" x1="0" y1="0" x2="0" y2="1"><stop offset="0" stopColor="#15101f" /><stop offset=".45" stopColor="#251860" /><stop offset="1" stopColor="#4335c8" /></linearGradient></defs>
            <rect x=".5" y=".5" width="32" height="33" rx="2" fill="url(#tx)" stroke="#6a5a90" />
            <path d="M4 3l3 4 6 5-7 1 1-4z" fill="#b9e040" />
            <g fill="#f5d60a" fontFamily="Liberation Serif, serif" fontSize="15"><text x="6" y="27">T</text><text x="13" y="31">E</text><text x="20" y="27">X</text></g>
          </svg>
        </TaskIcon>
        <TaskIcon $gap={41} $w={34}>
          <svg width="34" height="34" fill="none"><path d="M1 1h16l6 7v25H1z" fill="#fff" stroke="#888" strokeWidth="1.400" /><path d="M17 1v7h6" stroke="#888" /><path d="M13 17v-2.500H4l5 6.500-5 6.500h9V25" stroke="#222" strokeWidth="1.900" /><path d="M16 24L30 8.500" stroke="#1c5ba6" strokeWidth="4.500" /><path d="M29 12l4-5" stroke="#1c5ba6" strokeWidth="1.500" /><path d="M10 31l2.500-6 4 2.500z" fill="#f0a040" /></svg>
        </TaskIcon>
        <ActiveApp><AppTile><TableauMark s={29} /></AppTile></ActiveApp>
        <TaskIcon $gap={162} $w={36}><Icon w={36} h={25} c="#000" sw={2.4}><path d="M1.500 1.500h30v21.500h-28q-2 0-2-2zM31.500 5.500h3.200V21q0 2-3 2M5 6h22M17.500 11H28M17.500 15H28M17.500 19H28M6 11.500h8v7H6z" /></Icon></TaskIcon>
        <TrayText $gap={12} $w={44} $s={19.4} $t={3}>33°C</TrayText>
        <TaskIcon $gap={26} $w={18}><Icon w={18} h={11} c="#222" sw={1.6}><path d="M.5 10L9 1.500 17.500 10" /></Icon></TaskIcon>
        <TaskIcon $gap={17} $w={20}><svg width="20" height="25"><rect width="19" height="25" rx="9" fill="#0a84ff" /><path d="M5 8l9 8.500-4.500 4V4.500l4.500 4L5 17" fill="none" stroke="#fff" strokeWidth="1.600" /></svg></TaskIcon>
        <TaskIcon $gap={18} $w={19}><Icon w={19} h={20} c="#222" sw={1.4}><path d="M.7 19C1 9 8 1.500 18.500 1M5 19C5.500 12 10.500 6.500 18.500 6M9.500 19c.5-4.500 4-7.500 9-8M13.500 19c.5-2 2-3.500 5-4" /><circle cx="17" cy="18" r="1.500" fill="#222" stroke="none" /></Icon></TaskIcon>
        <TaskIcon $gap={18} $w={16}><Icon w={17} h={23} c="#222" sw={1.5}><path d="M2 2.500c3-2 7-2 10 0M2 20.500c3 2 7 2 10 0" /><rect x="1" y="6" width="10" height="11" rx="1" /><path d="M11 10l5-3v9l-5-3" /></Icon></TaskIcon>
        <TaskIcon $gap={16} $w={24}><Icon w={24} h={13} c="#222" sw={1.3}><path d="M1 1h20.500v11H1zM22 4.500h1.500v4H22" /><path d="M3 3h5v7H3z" fill="#111" stroke="none" /></Icon></TaskIcon>
        <TaskIcon $gap={12} $w={24}><Icon w={24} h={19} c="#222" sw={1.4}><path d="M1 6.500h3.500L10 1.500v16l-5.500-5H1zM13 6.500c1.500 2 1.500 4 0 6M16 4c3 3.500 3 7.500 0 11M19 1.500c5 5 5 11 0 16" /></Icon></TaskIcon>
        <TrayText $gap={16} $w={35} $s={16.3}>ENG</TrayText>
        <Clock><span>04:45 PM</span><span>06-05-2023</span></Clock>
        <Notice><svg width="25" height="25"><path d="M0 0h24v19h-7v5l-6-5H0z" fill="#000" /><path d="M4 5h16M4 9.500h16M4 14h10" stroke="#e8f0e0" strokeWidth="1.500" /></svg><Count>1</Count></Notice>
        <Peek />
      </Taskbar>
    </Window>
  );
}
